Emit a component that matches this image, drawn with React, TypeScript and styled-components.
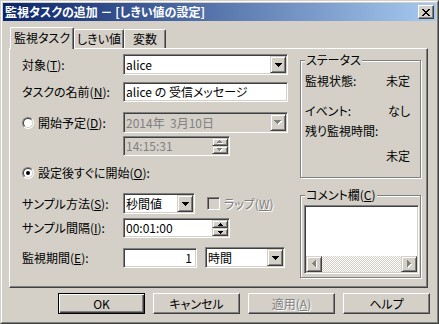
import React from "react";
import styled, { createGlobalStyle } from "styled-components";

const FACE = "#D4D0C8";
const HI = "#FFFFFF";
const SH = "#808080";
const DK = "#404040";

const Global = createGlobalStyle`
  html, body { margin: 0; padding: 0; background: ${FACE}; }
  body {
    font-family: "Noto Sans CJK JP", "Noto Sans", sans-serif;
    font-size: 12px;
    line-height: 14px;
    font-feature-settings: "palt";
    color: #000;
  }
  * { box-sizing: border-box; }
`;

const Window = styled.div`
  width: 439px;
  height: 324px;
  background: ${FACE};
  border: 1px solid;
  border-color: ${FACE} ${DK} ${DK} ${FACE};
  display: flex;
`;

const Frame = styled.div`
  flex: 1;
  border: 1px solid;
  border-color: ${HI} ${SH} ${SH} ${HI};
  padding: 1px;
  display: flex;
  flex-direction: column;
`;

const TitleBar = styled.div`
  height: 18px;
  flex: 0 0 18px;
  background: linear-gradient(to right, #0a246a, #a6caf0);
  display: flex;
  align-items: center;
  justify-content: space-between;
  padding: 0 2px 0 2px;
`;

const TitleText = styled.span`
  color: #fff;
  font-weight: 700;
  white-space: pre;
`;

const CloseButton = styled.div`
  width: 16px;
  height: 14px;
  background: ${FACE};
  border: 1px solid;
  border-color: ${HI} ${DK} ${DK} ${HI};
  box-shadow: inset -1px -1px 0 ${SH};
  display: flex;
  align-items: center;
  justify-content: center;
  padding-right: 1px;
`;

const Body = styled.div`
  flex: 1;
  display: flex;
  flex-direction: column;
  padding: 6px 6px 0 6px;
`;

const TabStrip = styled.div`
  height: 21px;
  display: flex;
  align-items: flex-end;
  padding-left: 1px;
`;

const Tab = styled.div<{ $active?: boolean; $w: number }>`
  position: relative;
  z-index: ${(p) => (p.$active ? 2 : 1)};
  width: ${(p) => p.$w}px;
  height: ${(p) => (p.$active ? 22 : 19)}px;
  margin-bottom: ${(p) => (p.$active ? -1 : 0)}px;
  background: ${FACE};
  border-top: 1px solid ${HI};
  border-left: 1px solid ${HI};
  border-right: 1px solid ${DK};
  border-radius: 2px 2px 0 0;
  box-shadow: inset -1px 0 0 ${SH};
  display: flex;
  align-items: center;
  justify-content: center;
  padding-bottom: ${(p) => (p.$active ? 2 : 0)}px;
  white-space: nowrap;
`;

const Panel = styled.div`
  height: 240px;
  margin-right: 2px;
  border: 1px solid;
  border-color: ${HI} ${DK} ${DK} ${HI};
  box-shadow: inset -1px -1px 0 ${SH};
  display: grid;
  grid-template-columns: 1fr 121px;
  align-items: start;
  padding: 5px 6px 0 12px;
`;

const FormColumn = styled.div`
  display: flex;
  flex-direction: column;
`;

const Row = styled.div<{ $mt: number; $h: number }>`
  display: flex;
  align-items: center;
  margin-top: ${(p) => p.$mt}px;
  height: ${(p) => p.$h}px;
`;

const Label = styled.div<{ $w?: number; $disabled?: boolean }>`
  flex: 0 0 ${(p) => p.$w ?? 101}px;
  display: flex;
  align-items: center;
  white-space: nowrap;
  color: ${(p) => (p.$disabled ? SH : "#000")};
  text-shadow: ${(p) => (p.$disabled ? `1px 1px 0 ${HI}` : "none")};
`;

const Key = styled.span`
  text-decoration: underline;
  text-underline-offset: 1px;
`;

const RadioOuter = styled.span`
  width: 12px;
  height: 12px;
  margin-right: 4px;
  border-radius: 50%;
  border: 1px solid;
  border-color: ${SH} ${HI} ${HI} ${SH};
  display: flex;
  flex: 0 0 12px;
`;

const RadioInner = styled.span<{ $checked?: boolean }>`
  flex: 1;
  border-radius: 50%;
  border: 1px solid;
  border-color: ${DK} ${FACE} ${FACE} ${DK};
  background: #fff;
  display: flex;
  align-items: center;
  justify-content: center;
  &::after {
    content: "";
    width: 4px;
    height: 4px;
    border-radius: 50%;
    background: ${(p) => (p.$checked ? "#000" : "transparent")};
  }
`;

const Sunken = styled.div<{ $w: number; $h: number; $disabled?: boolean; $ml?: number }>`
  width: ${(p) => p.$w}px;
  height: ${(p) => p.$h}px;
  margin-left: ${(p) => p.$ml ?? 0}px;
  background: ${(p) => (p.$disabled ? FACE : "#fff")};
  border: 1px solid;
  border-color: ${SH} ${HI} ${HI} ${SH};
  box-shadow: inset 1px 1px 0 ${DK}, inset -1px -1px 0 ${FACE};
  padding: 1px;
  display: flex;
  align-items: stretch;
  flex: 0 0 auto;
`;

const FieldText = styled.div<{ $disabled?: boolean; $right?: boolean }>`
  flex: 1;
  min-width: 0;
  display: flex;
  align-items: center;
  justify-content: ${(p) => (p.$right ? "flex-end" : "flex-start")};
  padding: ${(p) => (p.$right ? "0 3px 0 0" : "0 0 0 1px")};
  white-space: pre;
  overflow: hidden;
  color: ${(p) => (p.$disabled ? SH : "#000")};
`;

const Raised = styled.div<{ $fill?: boolean }>`
  width: 16px;
  flex: ${(p) => (p.$fill ? "1 1 0" : "0 0 16px")};
  background: ${FACE};
  border: 1px solid;
  border-color: ${FACE} ${DK} ${DK} ${FACE};
  box-shadow: inset 1px 1px 0 ${HI}, inset -1px -1px 0 ${SH};
  display: flex;
  align-items: center;
  justify-content: center;
`;

const SpinStack = styled.div`
  display: flex;
  flex-direction: column;
  flex: 0 0 16px;
  width: 16px;
`;

const CheckBox = styled.span`
  width: 13px;
  height: 13px;
  margin: 0 4px 0 12px;
  border: 1px solid;
  border-color: ${SH} ${HI} ${HI} ${SH};
  box-shadow: inset 1px 1px 0 ${DK}, inset -1px -1px 0 ${FACE};
  background: ${FACE};
  flex: 0 0 13px;
`;

const SideColumn = styled.div`
  display: flex;
  flex-direction: column;
  margin-top: 6px;
`;

const Group = styled.div<{ $h: number; $mt?: number }>`
  position: relative;
  height: ${(p) => p.$h}px;
  margin-top: ${(p) => p.$mt ?? 0}px;
  border: 1px solid ${SH};
  box-shadow: 1px 1px 0 ${HI}, inset 1px 1px 0 ${HI};
  display: flex;
  flex-direction: column;
`;

const Legend = styled.span`
  position: absolute;
  top: -8px;
  left: 4px;
  padding: 0 1px;
  background: ${FACE};
  white-space: nowrap;
  line-height: 14px;
`;

const StatusBody = styled.div`
  display: flex;
  flex-direction: column;
  padding: 12px 10px 0 4px;
`;

const StatusRow = styled.div<{ $mt: number }>`
  display: flex;
  justify-content: space-between;
  height: 16px;
  align-items: center;
  margin-top: ${(p) => p.$mt}px;
  white-space: nowrap;
`;

const CommentBody = styled.div`
  flex: 1;
  padding: 9px 1px 3px 3px;
  display: flex;
`;

const TextArea = styled.div`
  flex: 1;
  background: #fff;
  border: 1px solid;
  border-color: ${SH} ${HI} ${HI} ${SH};
  box-shadow: inset 1px 1px 0 ${DK}, inset -1px -1px 0 ${FACE};
  padding: 1px;
  display: flex;
  flex-direction: column;
  justify-content: flex-end;
`;

const HScroll = styled.div`
  height: 16px;
  display: flex;
`;

const ScrollBtn = styled.div`
  width: 16px;
  height: 16px;
  background: ${FACE};
  border: 1px solid;
  border-color: ${FACE} ${DK} ${DK} ${FACE};
  box-shadow: inset 1px 1px 0 ${HI}, inset -1px -1px 0 ${SH};
  display: flex;
  align-items: center;
  justify-content: center;
`;

const Track = styled.div`
  flex: 1;
  background-color: #fff;
  background-image: repeating-conic-gradient(${FACE} 0 25%, #fff 0 50%);
  background-size: 2px 2px;
`;

const ButtonRow = styled.div`
  display: flex;
  justify-content: flex-end;
  gap: 8px;
  margin-top: 5px;
`;

const PushButton = styled.div<{ $default?: boolean; $disabled?: boolean }>`
  width: 87px;
  height: 21px;
  background: ${FACE};
  border: 1px solid;
  border-color: ${(p) => (p.$default ? "#000" : `${HI} ${DK} ${DK} ${HI}`)};
  box-shadow: ${(p) =>
    p.$default
      ? `inset 1px 1px 0 ${HI}, inset -1px -1px 0 ${DK}, inset -2px -2px 0 ${SH}`
      : `inset -1px -1px 0 ${SH}`};
  display: flex;
  align-items: center;
  justify-content: center;
  white-space: nowrap;
  color: ${(p) => (p.$disabled ? SH : "#000")};
  text-shadow: ${(p) => (p.$disabled ? `1px 1px 0 ${HI}` : "none")};
`;

type Dir = "up" | "down" | "left" | "right";

function Tri({ dir, w, color = "#000", shadow = false }: { dir: Dir; w: number; color?: string; shadow?: boolean }) {
  const rows = (w + 1) / 2;
  const horiz = dir === "up" || dir === "down";
  const W = (horiz ? w : rows) + (shadow ? 1 : 0);
  const H = (horiz ? rows : w) + (shadow ? 1 : 0);
  const rects = (dx: number, fill: string) => {
    const out: React.ReactElement[] = [];
    for (let i = 0; i < rows; i++) {
      const len = w - 2 * i;
      let r: { x: number; y: number; width: number; height: number };
      if (dir === "down") r = { x: i, y: i, width: len, height: 1 };
      else if (dir === "up") r = { x: i, y: rows - 1 - i, width: len, height: 1 };
      else if (dir === "right") r = { x: i, y: i, width: 1, height: len };
      else r = { x: rows - 1 - i, y: i, width: 1, height: len };
      out.push(<rect key={`${fill}${i}`} x={r.x + dx} y={r.y + dx} width={r.width} height={r.height} fill={fill} />);
    }
    return out;
  };
  return (
    <svg width={W} height={H} viewBox={`0 0 ${W} ${H}`} shapeRendering="crispEdges">
      {shadow && rects(1, HI)}
      {rects(0, color)}
    </svg>
  );
}

function CloseGlyph() {
  const rows: [number, number][][] = [
    [[0, 2], [6, 2]],
    [[1, 2], [5, 2]],
    [[2, 4]],
    [[3, 2]],
    [[2, 4]],
    [[1, 2], [5, 2]],
    [[0, 2], [6, 2]],
  ];
  return (
    <svg width={8} height={7} viewBox="0 0 8 7" shapeRendering="crispEdges">
      {rows.flatMap((segs, y) =>
        segs.map(([x, len], k) => <rect key={`${y}-${k}`} x={x} y={y} width={len} height={1} fill="#000" />)
      )}
    </svg>
  );
}

function Combo({ w, h = 21, text, disabled, ml }: { w: number; h?: number; text: string; disabled?: boolean; ml?: number }) {
  return (
    <Sunken $w={w} $h={h} $disabled={disabled} $ml={ml}>
      <FieldText $disabled={disabled}>{text}</FieldText>
      <Raised>
        {disabled ? <Tri dir="down" w={7} color={SH} shadow /> : <Tri dir="down" w={7} />}
      </Raised>
    </Sunken>
  );
}

function Spin({ w, text, disabled }: { w: number; text: string; disabled?: boolean }) {
  const c = disabled ? SH : "#000";
  return (
    <Sunken $w={w} $h={20} $disabled={disabled}>
      <FieldText $disabled={disabled}>{text}</FieldText>
      <SpinStack>
        <Raised $fill>
          <Tri dir="up" w={5} color={c} shadow={disabled} />
        </Raised>
        <Raised $fill>
          <Tri dir="down" w={5} color={c} shadow={disabled} />
        </Raised>
      </SpinStack>
    </Sunken>
  );
}

function Radio({ checked }: { checked?: boolean }) {
  return (
    <RadioOuter>
      <RadioInner $checked={checked} />
    </RadioOuter>
  );
}

export default function App() {
  return (
    <>
      <Global />
      <Window>
        <Frame>
          <TitleBar>
            <TitleText>監視タスクの追加 － [しきい値の設定]</TitleText>
            <CloseButton>
              <CloseGlyph />
            </CloseButton>
          </TitleBar>
          <Body>
            <TabStrip>
              <Tab $active $w={64}>監視タスク</Tab>
              <Tab $w={50}>しきい値</Tab>
              <Tab $w={42}>変数</Tab>
            </TabStrip>
            <Panel>
              <FormColumn>
                <Row $mt={0} $h={21}>
                  <Label>
                    対象(<Key>T</Key>):
                  </Label>
                  <Combo w={165} text="alice" />
                </Row>
                <Row $mt={7} $h={20}>
                  <Label>
                    タスクの名前(<Key>N</Key>):
                  </Label>
                  <Sunken $w={165} $h={20}>
                    <FieldText>alice の 受信メッセージ</FieldText>
                  </Sunken>
                </Row>
                <Row $mt={10} $h={21}>
                  <Label>
                    <Radio />
                    開始予定(<Key>D</Key>):
                  </Label>
                  <Combo w={165} text="2014年  3月10日" disabled />
                </Row>
                <Row $mt={3} $h={20}>
                  <Label />
                  <Spin w={107} text="14:15:31" disabled />
                </Row>
                <Row $mt={9} $h={16}>
                  <Label $w={200}>
                    <Radio checked />
                    設定後すぐに開始(<Key>O</Key>):
                  </Label>
                </Row>
                <Row $mt={12} $h={21}>
                  <Label>
                    サンプル方法(<Key>S</Key>):
                  </Label>
                  <Combo w={72} text="秒間値" />
                  <CheckBox />
                  <Label $w={70} $disabled>
                    ラップ(<Key>W</Key>)
                  </Label>
                </Row>
                <Row $mt={4} $h={20}>
                  <Label>
                    サンプル間隔(<Key>I</Key>):
                  </Label>
                  <Spin w={107} text="00:01:00" />
                </Row>
                <Row $mt={9} $h={21}>
                  <Label>
                    監視期間(<Key>E</Key>):
                  </Label>
                  <Sunken $w={74} $h={20}>
                    <FieldText $right>1</FieldText>
                  </Sunken>
                  <Combo w={80} text="時間" ml={8} />
                </Row>
              </FormColumn>
              <SideColumn>
                <Group $h={118}>
                  <Legend>ステータス</Legend>
                  <StatusBody>
                    <StatusRow $mt={0}>
                      <span>監視状態:</span>
                      <span>未定</span>
                    </StatusRow>
                    <StatusRow $mt={14}>
                      <span>イベント:</span>
                      <span>なし</span>
                    </StatusRow>
                    <StatusRow $mt={4}>
                      <span>残り監視時間:</span>
                      <span />
                    </StatusRow>
                    <StatusRow $mt={9}>
                      <span />
                      <span>未定</span>
                    </StatusRow>
                  </StatusBody>
                </Group>
                <Group $h={83} $mt={17}>
                  <Legend>
                    コメント欄(<Key>C</Key>)
                  </Legend>
                  <CommentBody>
                    <TextArea>
                      <HScroll>
                        <ScrollBtn>
                          <Tri dir="left" w={7} color={SH} shadow />
                        </ScrollBtn>
                        <Track />
                        <ScrollBtn>
                          <Tri dir="right" w={7} color={SH} shadow />
                        </ScrollBtn>
                      </HScroll>
                    </TextArea>
                  </CommentBody>
                </Group>
              </SideColumn>
            </Panel>
            <ButtonRow>
              <PushButton $default>OK</PushButton>
              <PushButton>キャンセル</PushButton>
              <PushButton $disabled>
                適用(<Key>A</Key>)
              </PushButton>
              <PushButton>ヘルプ</PushButton>
            </ButtonRow>
          </Body>
        </Frame>
      </Window>
    </>
  );
}
